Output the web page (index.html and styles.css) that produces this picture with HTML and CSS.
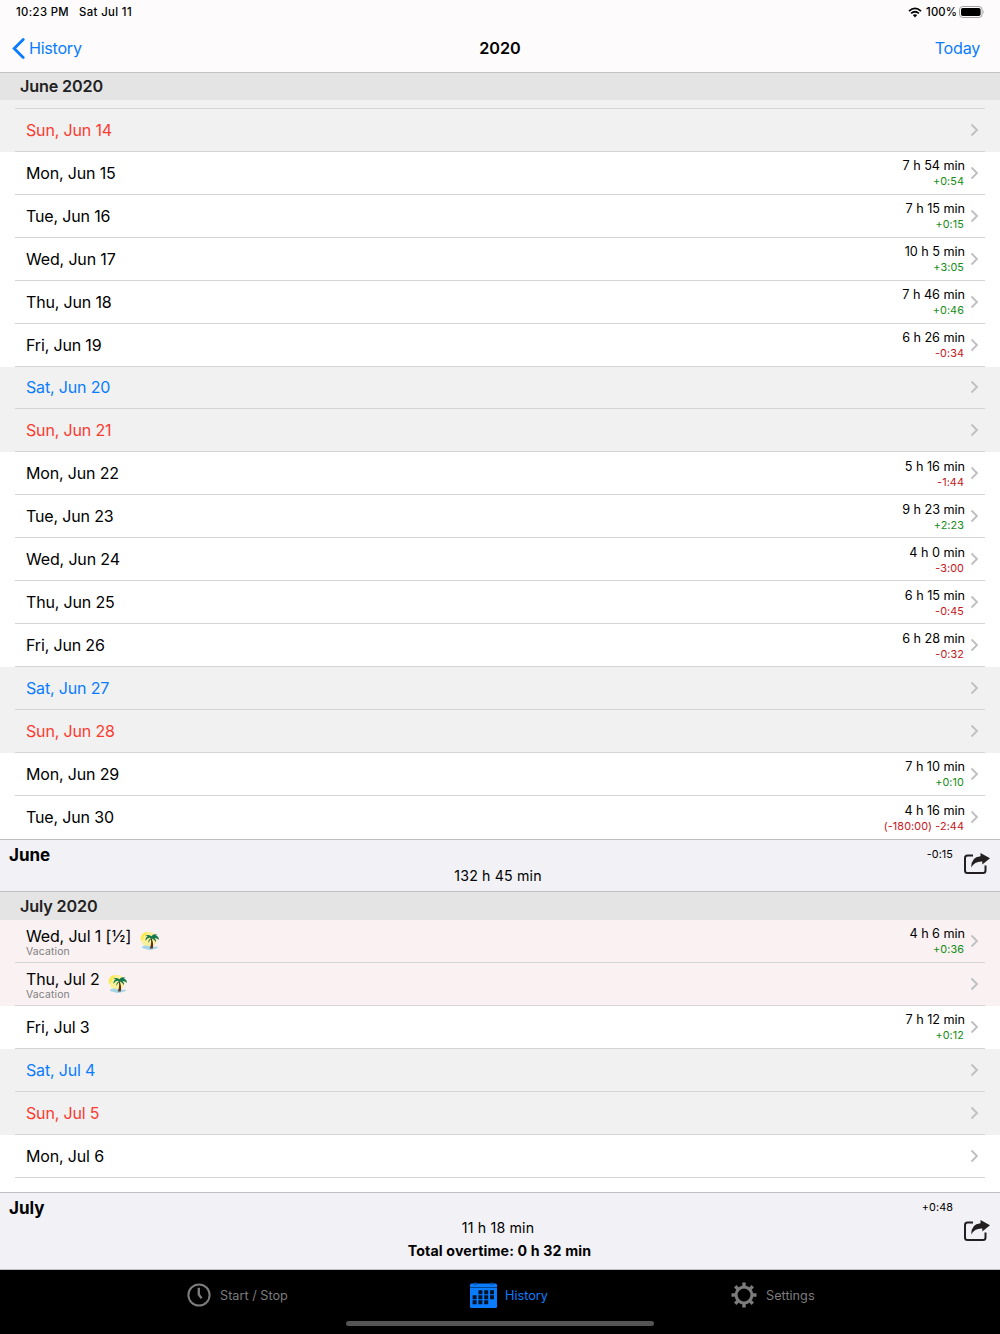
FILE: index.html
```
<!DOCTYPE html>
<html lang="en">
<head>
    <meta charset="UTF-8">
    <meta name="viewport" content="width=device-width, initial-scale=1.0">
    <title>History 2020</title>
    <link rel="stylesheet" href="styles.css">
</head>
<body>
    <svg class="symbols" width="0" height="0">
        <symbol id="chevron" viewBox="0 0 9 14"><path d="M1.5 1.5 L7 7 L1.5 12.5" fill="none" stroke="#c0c0c2" stroke-width="1.9"/></symbol>
        <symbol id="share" viewBox="0 0 27 24">
            <path d="M10 3.5 H4.5 Q2 3.5 2 6 V18.5 Q2 21 4.5 21 H20 Q22.5 21 22.5 18.5 V13.5" fill="none" stroke="#231f20" stroke-width="2"/>
            <path d="M17.5 1 L27 6.3 L19.3 12.6 V9.6 Q11.5 9.2 8.2 15.6 Q8 4.8 17.5 4.2 Z" fill="#231f20"/>
        </symbol>
        <symbol id="palm" viewBox="0 0 20 20">
            <circle cx="9" cy="8.5" r="7.8" fill="#fdf09a"/>
            <path d="M0.8 6 Q2 1.5 7 1 L6.5 4 L4 5 L3.5 8 L0.8 10Z" fill="#fbe94e"/>
            <path d="M1.5 16 Q5 13.8 9 15 T18 15.5 Q18 17.5 14 18 Q10 20 6 18 Q3 18 1.5 16Z" fill="#a8d4e8"/>
            <path d="M11.4 7 Q13.8 11.5 12.8 17.6 L9.8 17.6 Q12 12 10.6 7.5Z" fill="#5a3324"/>
            <path d="M11.2 7.2 Q8 5.8 5.5 9.8 Q5.2 6.5 8 5.6 Q6.8 4.8 5.2 5.2 Q8 2.6 11.3 5.3 Q13.5 2.2 17.5 3.8 L15.8 4.7 Q19 5.2 18.8 9 Q17 6.8 14.5 6.9 Q16.5 8.5 16 11.3 Q14.5 8.5 12 7.4 Q9.5 8.5 8.5 12 Q7.8 8.5 11.2 7.2Z" fill="#16784c"/>
        </symbol>
    </svg>

    <header class="top">
        <div class="status-bar">
            <span class="time">10:23 PM</span>
            <span class="date">Sat Jul 11</span>
            <div class="status-right">
                <svg class="wifi" width="14" height="11" viewBox="0 0 14 11">
                    <path d="M1 4.1 Q7 -1.3 13 4.1 M3.1 6.4 Q7 3 10.9 6.4" fill="none" stroke="#000" stroke-width="1.8"/>
                    <path d="M4.8 8.1 Q7 6.3 9.2 8.1 L7 10.4Z"/>
                </svg>
                <span class="percent">100%</span>
                <svg class="battery" width="26" height="12" viewBox="0 0 26 12">
                    <rect x="0.5" y="0.5" width="22.6" height="11" rx="3.2" fill="none" stroke="#a3a3a3"/>
                    <rect x="2" y="2" width="19.6" height="8" rx="1.8"/>
                    <path d="M24.2 4 Q25.6 6 24.2 8Z" fill="#a3a3a3"/>
                </svg>
            </div>
        </div>
        <nav class="nav-bar">
            <div class="nav-back">
                <svg width="13" height="21" viewBox="0 0 13 21"><path d="M11.2 1.5 L2.2 10.5 L11.2 19.5" fill="none" stroke="#0a7cff" stroke-width="2.8" stroke-linecap="round"/></svg>
                <span>History</span>
            </div>
            <h1>2020</h1>
            <div class="nav-today">Today</div>
        </nav>
    </header>

    <main>
        <section class="month june">
            <h2>June 2020</h2>
            <div class="row weekend partial"><div class="cell"></div></div>
            <div class="row weekend"><div class="cell"><span class="day sunday">Sun, Jun 14</span><svg class="chevron"><use href="#chevron"/></svg></div></div>
            <div class="row"><div class="cell"><span class="day">Mon, Jun 15</span><div class="hours"><span>7 h 54 min</span><span class="diff plus">+0:54</span></div><svg class="chevron"><use href="#chevron"/></svg></div></div>
            <div class="row"><div class="cell"><span class="day">Tue, Jun 16</span><div class="hours"><span>7 h 15 min</span><span class="diff plus">+0:15</span></div><svg class="chevron"><use href="#chevron"/></svg></div></div>
            <div class="row"><div class="cell"><span class="day">Wed, Jun 17</span><div class="hours"><span>10 h 5 min</span><span class="diff plus">+3:05</span></div><svg class="chevron"><use href="#chevron"/></svg></div></div>
            <div class="row"><div class="cell"><span class="day">Thu, Jun 18</span><div class="hours"><span>7 h 46 min</span><span class="diff plus">+0:46</span></div><svg class="chevron"><use href="#chevron"/></svg></div></div>
            <div class="row"><div class="cell"><span class="day">Fri, Jun 19</span><div class="hours"><span>6 h 26 min</span><span class="diff minus">-0:34</span></div><svg class="chevron"><use href="#chevron"/></svg></div></div>
            <div class="row weekend"><div class="cell"><span class="day saturday">Sat, Jun 20</span><svg class="chevron"><use href="#chevron"/></svg></div></div>
            <div class="row weekend"><div class="cell"><span class="day sunday">Sun, Jun 21</span><svg class="chevron"><use href="#chevron"/></svg></div></div>
            <div class="row"><div class="cell"><span class="day">Mon, Jun 22</span><div class="hours"><span>5 h 16 min</span><span class="diff minus">-1:44</span></div><svg class="chevron"><use href="#chevron"/></svg></div></div>
            <div class="row"><div class="cell"><span class="day">Tue, Jun 23</span><div class="hours"><span>9 h 23 min</span><span class="diff plus">+2:23</span></div><svg class="chevron"><use href="#chevron"/></svg></div></div>
            <div class="row"><div class="cell"><span class="day">Wed, Jun 24</span><div class="hours"><span>4 h 0 min</span><span class="diff minus">-3:00</span></div><svg class="chevron"><use href="#chevron"/></svg></div></div>
            <div class="row"><div class="cell"><span class="day">Thu, Jun 25</span><div class="hours"><span>6 h 15 min</span><span class="diff minus">-0:45</span></div><svg class="chevron"><use href="#chevron"/></svg></div></div>
            <div class="row"><div class="cell"><span class="day">Fri, Jun 26</span><div class="hours"><span>6 h 28 min</span><span class="diff minus">-0:32</span></div><svg class="chevron"><use href="#chevron"/></svg></div></div>
            <div class="row weekend"><div class="cell"><span class="day saturday">Sat, Jun 27</span><svg class="chevron"><use href="#chevron"/></svg></div></div>
            <div class="row weekend"><div class="cell"><span class="day sunday">Sun, Jun 28</span><svg class="chevron"><use href="#chevron"/></svg></div></div>
            <div class="row"><div class="cell"><span class="day">Mon, Jun 29</span><div class="hours"><span>7 h 10 min</span><span class="diff plus">+0:10</span></div><svg class="chevron"><use href="#chevron"/></svg></div></div>
            <div class="row last"><div class="cell"><span class="day">Tue, Jun 30</span><div class="hours"><span>4 h 16 min</span><span class="diff minus">(-180:00) -2:44</span></div><svg class="chevron"><use href="#chevron"/></svg></div></div>
            <div class="summary">
                <h3>June</h3>
                <div class="totals"><p>132 h 45 min</p></div>
                <div class="summary-right"><span>-0:15</span><svg class="share"><use href="#share"/></svg></div>
            </div>
        </section>

        <section class="month july">
            <h2>July 2020</h2>
            <div class="row vacation"><div class="cell"><div class="day-note"><span class="day">Wed, Jul 1 <span class="half">[½]</span></span><small>Vacation</small></div><svg class="palm"><use href="#palm"/></svg><div class="hours"><span>4 h 6 min</span><span class="diff plus">+0:36</span></div><svg class="chevron"><use href="#chevron"/></svg></div></div>
            <div class="row vacation"><div class="cell"><div class="day-note"><span class="day">Thu, Jul 2</span><small>Vacation</small></div><svg class="palm"><use href="#palm"/></svg><svg class="chevron"><use href="#chevron"/></svg></div></div>
            <div class="row"><div class="cell"><span class="day">Fri, Jul 3</span><div class="hours"><span>7 h 12 min</span><span class="diff plus">+0:12</span></div><svg class="chevron"><use href="#chevron"/></svg></div></div>
            <div class="row weekend"><div class="cell"><span class="day saturday">Sat, Jul 4</span><svg class="chevron"><use href="#chevron"/></svg></div></div>
            <div class="row weekend"><div class="cell"><span class="day sunday">Sun, Jul 5</span><svg class="chevron"><use href="#chevron"/></svg></div></div>
            <div class="row"><div class="cell"><span class="day">Mon, Jul 6</span><svg class="chevron"><use href="#chevron"/></svg></div></div>
            <div class="summary">
                <h3>July</h3>
                <div class="totals"><p>11 h 18 min</p><p class="overtime">Total overtime: 0 h 32 min</p></div>
                <div class="summary-right"><span>+0:48</span><svg class="share"><use href="#share"/></svg></div>
            </div>
        </section>
    </main>

    <footer class="tab-bar">
        <div class="tabs">
            <div class="tab start">
                <svg width="24" height="24" viewBox="0 0 24 24" fill="none" stroke="#7c7c7c" stroke-width="2"><circle cx="12" cy="12" r="10.6"/><path d="M11.8 4.8 V11.7 L14.6 15.2" stroke-width="2.4"/></svg>
                <span>Start / Stop</span>
            </div>
            <div class="tab history active">
                <svg width="27" height="26" viewBox="0 0 27 26">
                    <path d="M0 3 Q0 1.5 1.5 1.5 H25.5 Q27 1.5 27 3 V24.5 Q27 26 25.5 26 H1.5 Q0 26 0 24.5Z" fill="#0a7cff"/>
                    <path d="M0 5.5 H27" stroke="#05438c" stroke-width="1"/>
                    <path d="M3.8 3 V1.2 Q5.3 -.4 6.8 1.2 V3Z M20.2 3 V1.2 Q21.7 -.4 23.2 1.2 V3Z" fill="#0759b8"/>
                    <path d="M8.4 8.2h4v4h-4z M14.2 8.2h4v4h-4z M20 8.2h4v4h-4z M2.6 13.2h4v4h-4z M8.4 13.2h4v4h-4z M14.2 13.2h4v4h-4z M20 13.2h4v4h-4z M2.6 18.2h4v4h-4z M8.4 18.2h4v4h-4z M14.2 18.2h4v4h-4z" fill="#001226"/>
                </svg>
                <span>History</span>
            </div>
            <div class="tab settings">
                <svg width="26" height="26" viewBox="0 0 26 26" fill="none" stroke="#7c7c7c">
                    <circle cx="13" cy="13" r="7.9" stroke-width="3"/>
                    <path d="M13 .5 V5 M13 21 V25.5 M.5 13 H5 M21 13 H25.5 M4.2 4.2 L7.4 7.4 M18.6 18.6 L21.8 21.8 M4.2 21.8 L7.4 18.6 M18.6 7.4 L21.8 4.2" stroke-width="3.4"/>
                </svg>
                <span>Settings</span>
            </div>
        </div>
        <div class="home-indicator"></div>
    </footer>
</body>
</html>
```
FILE: styles.css
```
:root {
    --blue: #0a7cff;
    --red: #fb3b30;
    --line: #d4d4d6;
    --strong-line: #bfbfc1;
    --weekend-bg: #f1f1f1;
    --vacation-bg: #f9f1f2;
    --header-bg: #e4e4e4;
    --summary-bg: #f1f1f6;
}

* {
    box-sizing: border-box;
}

body {
    margin: 0;
    width: 1000px;
    height: 1334px;
    overflow: hidden;
    display: flex;
    flex-direction: column;
    font-family: Inter, "Liberation Sans", sans-serif;
    background-color: #fff;
    color: #000;
}

h1, h2, h3, p {
    margin: 0;
}

.symbols {
    position: absolute;
}

.top {
    height: 73px;
    background-color: #fdfbfb;
    border-bottom: 1px solid #c4c3c3;
}

.status-bar {
    display: flex;
    align-items: center;
    height: 24px;
    padding: 0 15px 0 16px;
    font-size: 11.3px;
    font-weight: 500;
    letter-spacing: 0.38px;
}

.date {
    margin-left: 10px;
}

.status-right {
    display: flex;
    align-items: center;
    margin-left: auto;
}

.percent {
    margin: 0 2px 0 4px;
    letter-spacing: 0.1px;
}

.nav-bar {
    display: grid;
    grid-template-columns: 1fr auto 1fr;
    align-items: center;
    height: 48px;
    padding: 0 20px 0 12px;
    font-size: 16.2px;
    letter-spacing: -0.3px;
    color: var(--blue);
}

.nav-back {
    display: flex;
    align-items: center;
    gap: 4px;
}

.nav-bar h1 {
    font-size: 16.2px;
    font-weight: 600;
    letter-spacing: 0;
    color: #000;
    padding-left: 8px;
}

.nav-today {
    text-align: right;
}

.month h2 {
    height: 27.5px;
    padding-left: 20px;
    line-height: 28px;
    font-size: 16.2px;
    font-weight: 600;
    letter-spacing: -0.15px;
    color: #222;
    background-color: var(--header-bg);
}

.june h2 {
    height: 27px;
    line-height: 27px;
}

.row {
    height: 42.93px;
    padding: 0 15px;
}

.july .row {
    height: 43px;
}

.partial {
    height: 9px;
}

.weekend {
    background-color: var(--weekend-bg);
}

.vacation {
    background-color: var(--vacation-bg);
}

.cell {
    display: flex;
    align-items: center;
    height: 100%;
    padding: 0 6px 0 11px;
    border-bottom: 1px solid var(--line);
}

.last .cell {
    border-bottom: none;
}

.day {
    font-size: 16px;
    line-height: 20px;
    letter-spacing: -0.16px;
    white-space: nowrap;
}

.half {
    letter-spacing: 0.4px;
}

.sunday {
    color: var(--red);
}

.saturday {
    color: var(--blue);
}

.day-note {
    display: flex;
    flex-direction: column;
    padding-top: 1px;
}

.day-note small {
    font-size: 10.4px;
    line-height: 11px;
    letter-spacing: 0.15px;
    color: #7f7f7f;
}

.palm {
    width: 20px;
    height: 20px;
    margin-left: 8px;
}

.hours {
    display: flex;
    flex-direction: column;
    align-items: flex-end;
    margin-left: auto;
    padding-top: 2px;
    font-size: 12.7px;
    line-height: 17px;
    letter-spacing: -0.05px;
}

.diff {
    font-size: 10.8px;
    line-height: 16px;
    padding-right: 1px;
    letter-spacing: 0.1px;
}

.plus {
    color: #158c15;
}

.minus {
    color: #c4161c;
}

.chevron {
    width: 9px;
    height: 14px;
    margin-left: auto;
}

.hours + .chevron {
    margin-left: 5px;
}

.summary {
    display: grid;
    grid-template-columns: 200px 1fr 200px;
    height: 53.5px;
    padding: 0 10px 0 9px;
    background-color: var(--summary-bg);
    border-top: 1px solid var(--strong-line);
    border-bottom: 1px solid var(--strong-line);
}

.summary h3 {
    font-size: 17px;
    line-height: 30px;
    font-weight: 700;
}

.totals {
    padding-top: 24px;
    text-align: center;
    font-size: 14.2px;
    line-height: 23px;
    letter-spacing: 0.15px;
}

.totals p {
    padding-right: 3px;
}

.summary-right {
    display: flex;
    justify-content: flex-end;
    font-size: 10.8px;
    line-height: 29px;
    letter-spacing: 0.1px;
}

.share {
    width: 27px;
    height: 24px;
    margin: 12px 0 0 10px;
}

.july .summary {
    height: 78px;
    margin-top: 14px;
}

.july .totals {
    padding-top: 23px;
}

.july .share {
    margin-top: 26px;
}

.totals .overtime {
    padding-right: 0;
    font-weight: 700;
}

.tab-bar {
    flex: 1;
    display: flex;
    flex-direction: column;
    align-items: center;
    background-color: #000;
}

.tabs {
    display: flex;
    width: 100%;
    height: 51px;
    padding-left: 187px;
}

.tab {
    display: flex;
    align-items: center;
    font-size: 12.7px;
    color: #7c7c7c;
}

.tab span {
    padding-top: 1px;
}

.start {
    width: 283px;
    gap: 9px;
}

.history {
    width: 261px;
    gap: 8px;
}

.settings {
    gap: 9px;
}

.active {
    color: var(--blue);
}

.home-indicator {
    width: 308px;
    height: 5px;
    border-radius: 3px;
    background-color: #545454;
}
```
